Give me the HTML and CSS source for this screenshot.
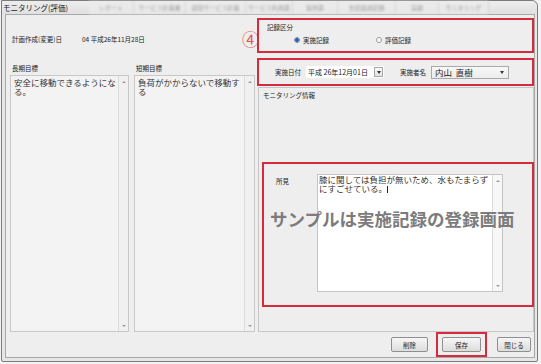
FILE: index.html
```html
<!DOCTYPE html>
<html lang="ja">
<head>
<meta charset="utf-8">
<title>モニタリング(評価)</title>
<link rel="stylesheet" href="styles.css">
</head>
<body>
<div class="window">
  <div class="titlebar">
    <span class="title">モニタリング(評価)</span>
    <div class="ghost">
      <span class="tab t1">レポート</span>
      <span class="tab t2">サービス計画書</span>
      <span class="tab t3">週間サービス計画</span>
      <span class="tab t4">サービス利用票</span>
      <span class="tab t5">提供票</span>
      <span class="tab t6">支援経過記録</span>
      <span class="tab t7">実績</span>
      <span class="tab t8">モニタリング</span>
    </div>
  </div>
  <div class="body">
    <div class="main">
      <div class="left">
        <div class="plan-row">
          <span class="plan-label">計画作成(変更)日</span>
          <span class="plan-value">04 平成26年11月28日</span>
          <span class="mark">④</span>
        </div>
        <div class="goals">
          <div class="goal goal-long">
            <div class="goal-label">長期目標</div>
            <div class="ta ta-gray">
              <div class="ta-text">安全に移動できるようにな<br>る。</div>
              <div class="sb"><span class="arr-up"></span><span class="arr-down"></span></div>
            </div>
          </div>
          <div class="goal goal-short">
            <div class="goal-label">短期目標</div>
            <div class="ta ta-gray">
              <div class="ta-text">負荷がかからないで移動す<br>る</div>
              <div class="sb"><span class="arr-up"></span><span class="arr-down"></span></div>
            </div>
          </div>
        </div>
      </div>
      <div class="right">
        <div class="redbox record">
          <div class="small">記録区分</div>
          <div class="radios">
            <label class="radio-item"><span class="radio on"></span><span>実施記録</span></label>
            <label class="radio-item second"><span class="radio"></span><span>評価記録</span></label>
          </div>
        </div>
        <div class="redbox exec">
          <span class="small">実施日付</span>
          <div class="date">
            <span class="date-text">平成 26年12月01日</span>
            <span class="dd"><span class="arr-down dark"></span></span>
          </div>
          <span class="small exec-name">実施者名</span>
          <div class="select">
            <span class="select-text">内山&nbsp;&nbsp;直樹</span>
            <span class="arr-down dark"></span>
          </div>
        </div>
        <div class="panel">
          <div class="small panel-title">モニタリング情報</div>
          <div class="redbox shoken">
            <span class="small shoken-label">所見</span>
            <div class="ta ta-white">
              <div class="ta-text shoken-text">膝に関しては負担が無いため、水もたまらず<br>にすごせている。<span class="caret"></span></div>
              <div class="sb sb-white"><span class="arr-up"></span><span class="arr-down"></span></div>
            </div>
            <div class="watermark">サンプルは実施記録の登録画面</div>
          </div>
        </div>
      </div>
    </div>
    <div class="footer">
      <button class="btn btn-del">削除</button>
      <div class="hl"><button class="btn btn-save">保存</button></div>
      <button class="btn btn-close">閉じる</button>
    </div>
  </div>
</div>
</body>
</html>
```
FILE: styles.css
```css
* { box-sizing: border-box; margin: 0; padding: 0; }
html, body { margin: 0; }
body {
  width: 541px;
  height: 364px;
  overflow: hidden;
  background: #f3f3f3;
  font-family: "Noto Sans CJK JP", "Noto Sans", sans-serif;
  color: #222;
}
.window {
  margin-left: 1px;
  width: 537px;
  height: 362px;
  border: 1px solid #7c7c7c;
  border-radius: 0 6px 2px 2px;
  background: #e6e6e6;
  display: flex;
  flex-direction: column;
}
.titlebar {
  height: 17px;
  display: flex;
  align-items: center;
  padding-left: 1px;
  background: linear-gradient(#ededed, #e0e0e0);
  border-radius: 0 6px 0 0;
}
.title {
  font-size: 7.5px;
  line-height: 10px;
  color: #222;
  width: 86px;
  flex: none;
}
.ghost {
  display: flex;
  height: 13px;
  filter: blur(1.1px);
  opacity: 0.75;
}
.tab {
  display: flex;
  align-items: center;
  justify-content: center;
  font-size: 6px;
  color: #8c8c8c;
  border-right: 1px solid #cfcfcf;
  white-space: nowrap;
  overflow: hidden;
  background: #ebebeb;
}
.t1 { width: 45px; }
.t2 { width: 52px; }
.t3 { width: 60px; }
.t4 { width: 47px; }
.t5 { width: 45px; }
.t6 { width: 58px; }
.t7 { width: 43px; }
.t8 { width: 50px; }

.body {
  flex: 1;
  margin: 0 2px 5px 3px;
  border: 1px solid #a8a8a8;
  background: #eeeeee;
  display: flex;
  flex-direction: column;
}
.main {
  display: flex;
  height: 317px;
}
.left {
  width: 251px;
  padding-left: 4px;
  display: flex;
  flex-direction: column;
}
.plan-row {
  height: 45px;
  display: flex;
  align-items: center;
  padding-left: 2px;
  padding-top: 2px;
  font-size: 6.5px;
}
.plan-label { width: 70px; }
.mark {
  margin-left: auto;
  margin-right: -2px;
  margin-top: 0;
  font-size: 17px;
  line-height: 17px;
  color: #e25555;
}
.goals {
  flex: 1;
  display: flex;
  gap: 5px;
}
.goal {
  display: flex;
  flex-direction: column;
}
.goal-long { width: 119px; }
.goal-short { width: 121px; }
.goal-label {
  height: 15px;
  padding-left: 2px;
  font-size: 6.5px;
  display: flex;
  align-items: center;
}
.ta {
  display: flex;
  border: 1px solid #c8c8c8;
}
.ta-gray {
  flex: 1;
  background: #f3f3f3;
}
.ta-text {
  flex: 1;
  padding: 2px 2px 0 3px;
  font-size: 8.5px;
  line-height: 9px;
  color: #333;
}
.sb {
  width: 10px;
  border-left: 1px solid #dcdcdc;
  background: #f0f0f0;
  display: flex;
  flex-direction: column;
  justify-content: space-between;
  align-items: center;
  padding: 5px 0 4px;
}
.sb-white { background: #f7f7f7; }
.arr-up {
  width: 0; height: 0;
  border-left: 2px solid transparent;
  border-right: 2px solid transparent;
  border-bottom: 2px solid #999;
}
.arr-down {
  width: 0; height: 0;
  border-left: 2px solid transparent;
  border-right: 2px solid transparent;
  border-top: 2px solid #999;
}
.arr-down.dark {
  border-left-width: 2.5px;
  border-right-width: 2.5px;
  border-top: 3px solid #333;
}

.right {
  flex: 1;
  display: flex;
  flex-direction: column;
}
.redbox { border: 2px solid #d42c3c; }
.small { font-size: 6.5px; line-height: 8px; }
.record {
  margin-top: 3px;
  height: 35px;
  padding: 3px 0 0 8px;
}
.radios {
  display: flex;
  margin-top: 5px;
  padding-left: 27px;
  height: 8px;
  align-items: center;
  font-size: 6.5px;
}
.radio-item {
  display: flex;
  align-items: center;
  gap: 3px;
  width: 82px;
}
.radio {
  width: 6px;
  height: 6px;
  border-radius: 50%;
  border: 1px solid #9a9a9a;
  background: #fff;
}
.radio.on {
  background: radial-gradient(circle, #2d62b8 0 1.6px, #fff 2px);
  border-color: #7a8aa8;
}
.exec {
  margin-top: 5px;
  height: 28px;
  display: flex;
  align-items: center;
  padding-left: 16px;
}
.date {
  margin-left: 5px;
  width: 78px;
  height: 12px;
  background: #fff;
  display: flex;
  align-items: center;
  font-size: 7px;
}
.date-text { flex: 1; padding-left: 2px; }
.dd {
  width: 9px;
  height: 10px;
  margin-right: 1px;
  border: 1px solid #a8a8a8;
  background: linear-gradient(#fafafa, #e2e2e2);
  display: flex;
  align-items: center;
  justify-content: center;
}
.exec-name { margin-left: 16px; }
.select {
  margin-left: 5px;
  width: 78px;
  height: 13px;
  border: 1px solid #a9a9a9;
  background: linear-gradient(#f8f8f8, #ececec);
  display: flex;
  align-items: center;
  padding: 0 4px 0 3px;
}
.select-text {
  flex: 1;
  font-size: 8.5px;
  line-height: 10px;
  color: #222;
}
.panel {
  flex: 1;
  margin-top: 1px;
  margin-left: 1px;
  border: 1px solid #c6c6c6;
  display: flex;
  flex-direction: column;
}
.panel-title { padding: 3px 0 0 4px; height: 11px; box-sizing: content-box; }
.shoken {
  position: relative;
  margin-top: 60px;
  margin-left: 3px;
  margin-right: -1px;
  height: 145px;
  display: flex;
  align-items: flex-start;
  padding: 10px 0 0 12px;
}
.shoken-label { width: 41px; padding-top: 3px; }
.ta-white {
  width: 186px;
  height: 118px;
  background: #fff;
  border-color: #c4c4c4;
}
.shoken-text { padding: 0 1px; }
.caret {
  display: inline-block;
  width: 1px;
  height: 7px;
  background: #222;
  vertical-align: -1px;
}
.watermark {
  position: absolute;
  left: 6px;
  top: 44px;
  font-size: 17.5px;
  line-height: 22px;
  font-weight: 700;
  color: #7c7c7c;
  white-space: nowrap;
}
.footer {
  flex: 1;
  display: flex;
  justify-content: flex-end;
  align-items: center;
  padding-right: 3px;
}
.btn {
  height: 15px;
  border: 1px solid #8f8f8f;
  border-radius: 2px;
  background: linear-gradient(#f6f6f6, #dddddd);
  font-family: "Noto Sans CJK JP", sans-serif;
  font-size: 6.5px;
  color: #222;
  display: flex;
  align-items: center;
  justify-content: center;
}
.btn-del { width: 37px; }
.btn-save { width: 39px; }
.btn-close { width: 34px; }
.hl {
  margin: 0 10px 0 8px;
  border: 2px solid #d42c3c;
  padding: 3px 4px;
}
```
